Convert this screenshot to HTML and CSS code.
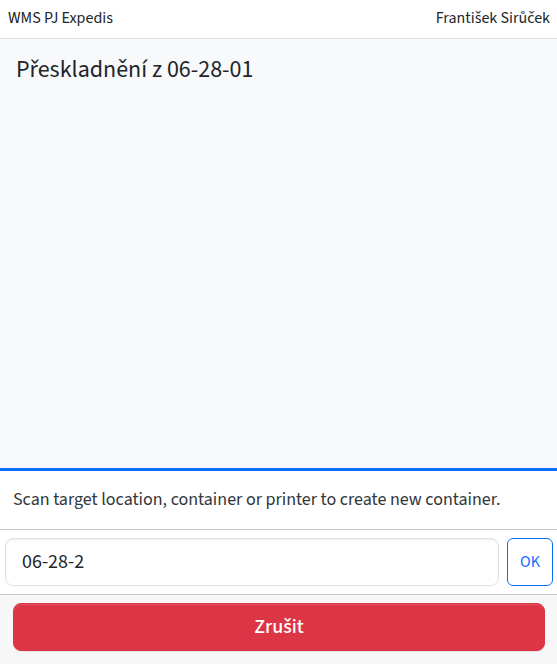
FILE: index.html
```html
<!DOCTYPE html>
<html lang="cs">
<head>
  <meta charset="utf-8">
  <meta name="viewport" content="width=device-width, initial-scale=1">
  <title>WMS PJ Expedis</title>
  <link rel="stylesheet" href="styles.css">
</head>
<body>
  <header class="topbar">
    <span>WMS PJ Expedis</span>
    <span>František Sirůček</span>
  </header>
  <main class="content">
    <h1 class="title">Přeskladnění z 06-28-01</h1>
  </main>
  <form class="scan">
    <label class="prompt" for="code">Scan target location, container or printer to create new container.</label>
    <div class="entry">
      <input class="code" id="code" type="text" value="06-28-2" autocomplete="off">
      <button class="btn ok" type="submit">OK</button>
    </div>
  </form>
  <footer class="actions">
    <button class="btn cancel" type="button">Zrušit</button>
  </footer>
</body>
</html>
```

FILE: styles.css
```css
* {
  box-sizing: border-box;
}

body {
  display: flex;
  flex-direction: column;
  min-height: 100vh;
  margin: 0;
  background: #f8f9fb;
  color: #212529;
  font-family: "Source Sans 3", "Source Sans Pro", "Noto Sans CJK SC", "Noto Sans", sans-serif;
  font-size: 16px;
  line-height: 24px;
}

.topbar {
  display: flex;
  justify-content: space-between;
  padding: 6px 7px 8px 8px;
  border-bottom: 1px solid #dee2e6;
  background: #fff;
}

.content {
  flex: 1;
  padding: 16px;
}

.title {
  margin: 0;
  font-size: 24px;
  font-weight: 400;
  line-height: 30px;
}

.scan {
  border-top: 3px solid #0d6efd;
  background: #fff;
}

.prompt {
  display: block;
  padding: 17px 13px;
  color: #32373c;
  font-size: 18px;
}

.entry {
  display: flex;
  gap: 8px;
  padding: 8px 4px 8px 5px;
  border-top: 1px solid #c8c9ca;
}

.code {
  flex: 1;
  min-width: 0;
  height: 48px;
  padding: 8px 16px;
  border: 1px solid #dee2e6;
  border-radius: 8px;
  background: #fff;
  box-shadow: inset 0 1px 2px rgba(0, 0, 0, 0.075);
  color: inherit;
  font: inherit;
  font-size: 20px;
}

.btn {
  height: 48px;
  border: 1px solid;
  font: inherit;
  cursor: pointer;
}

.ok {
  padding: 6px 12px;
  border-color: #0d6efd;
  border-radius: 6px;
  background: #fff;
  color: #0d6efd;
}

.actions {
  padding: 8px 12px 13px 13px;
  border-top: 1px solid #c8c9ca;
  background: #f7f7f7;
}

.cancel {
  width: 100%;
  border-color: #dc3545;
  border-radius: 8px;
  background: #dc3545;
  box-shadow: inset 0 1px 0 rgba(255, 255, 255, 0.15), 0 1px 1px rgba(0, 0, 0, 0.075);
  color: #fff;
  font-size: 20px;
  font-weight: 500;
}
```
